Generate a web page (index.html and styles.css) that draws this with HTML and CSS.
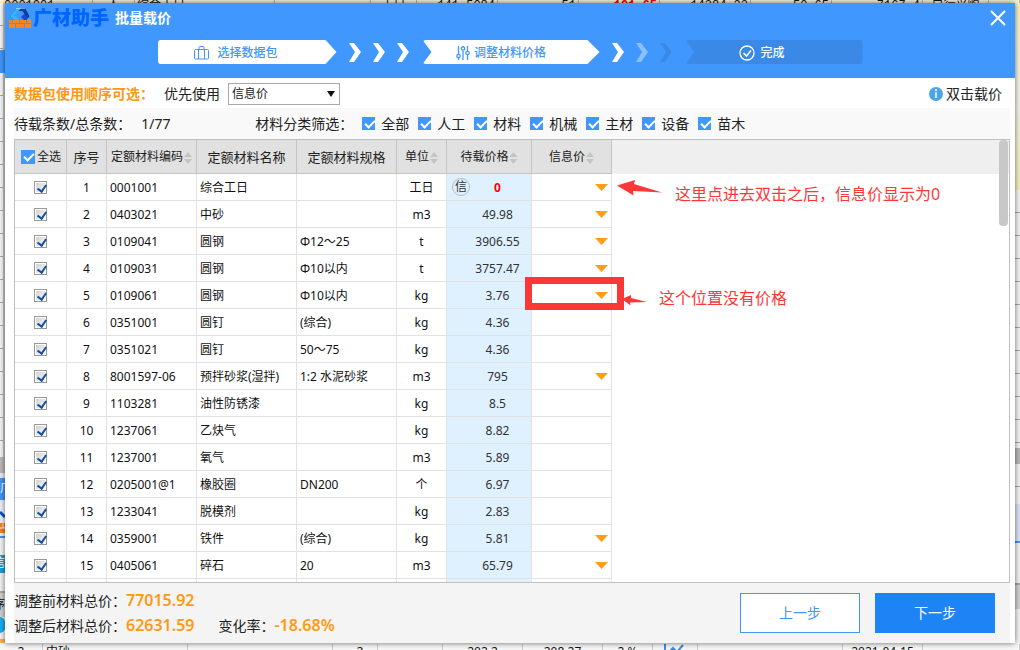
FILE: index.html
```html
<!DOCTYPE html>
<html lang="zh-CN">
<head>
<meta charset="utf-8">
<meta name="viewport" content="width=device-width, initial-scale=1">
<title>批量载价</title>
<link rel="stylesheet" href="styles.css">
</head>
<body>
<div class="backdrop" aria-hidden="true">
  <div class="sheet-row">
    <span class="c-code">0001001</span><span class="c-type">人</span><span class="c-name">综合工日</span><span class="c-blank"></span><span class="c-unit">工日</span><span class="c-num">141.5084</span><span class="c-num">51</span><span class="c-num alert">101.65</span><span class="c-wide">14384.33</span><span class="c-num">50.65</span><span class="c-wide">7167.4</span><span class="c-buy">自行采购</span><span class="c-rest"></span>
  </div>
  <div class="sheet-sides">
    <div class="side-left">
      <i class="tile lines"></i><i class="tile blue"></i><i class="tile lines grow"></i><i class="tile gray"></i><i class="tile pale"></i>
      <i class="tile logo-blue">广</i>
      <svg class="tile-mark" viewBox="0 0 5 36"><path d="M0 0h5v36H0z" fill="#eef3ff"/><path d="M0 12l5 5" stroke="#0a50c8" stroke-width="3"/><path d="M0 23h5v10H0z" fill="#ff8412"/><path d="M0 28h5M3 23v5" stroke="#fff"/></svg>
      <i class="tile rule"></i><i class="tile cyan">信</i><i class="tile pale gap"></i><i class="tile head">序</i><i class="tile cyan-dot"></i><i class="tile orange-dot"></i>
    </div>
    <div class="side-right">
      <i class="tile yellow"></i><i class="tile lines grow"></i><i class="tile gray"></i><i class="tile lines mid"></i><i class="tile pale blue-edge"></i><i class="tile plain"></i><i class="tile head"></i><i class="tile plain last"></i>
    </div>
  </div>
  <div class="list-row">
    <span class="l-no">2</span><span class="l-name">中砂</span><span class="l-blank"></span><span class="l-qty">2</span><span class="l-blank2"></span><span class="l-price">202.2</span><span class="l-price">208.27</span><span class="l-rate">2 %</span><span class="l-chart"><svg width="22" height="16" viewBox="0 0 22 16"><path d="M1 0v14h20M4 9l5-5 4 4 6-7" fill="none" stroke="#3c8cf0" stroke-width="2"/></svg></span><span class="l-blank3"></span><span class="l-date">2021-04-15</span><span class="l-rest"></span>
  </div>
</div>

<main class="dialog">
  <header class="top">
    <div class="titlebar">
      <svg class="logo" width="22" height="20" viewBox="0 0 22 20">
        <path d="M8 0h8l4.500 8-2 3-5-8H9L5 8l4 4H5L1 8z" fill="#0b3f9e"/>
        <path d="M8 0h4L5.500 7.500 10 12H5L1 8z" fill="#35b8ff"/>
        <path d="M7 0h9" stroke="#e8f4ff"/>
        <path d="M12 9l3.500-3.500L18 10v2h-3z" fill="#0a50d0"/>
        <path d="M0 16h6v4H0zM7 16h8v4H7zM16 16h6v4h-6zM0 12h3v3H0zM4 12h6v3H4zM11 12h6v3h-6zM18 11h4v4h-4z" fill="#ff8412"/>
      </svg>
      <strong class="brand">广材助手</strong>
      <h1 class="title">批量载价</h1>
      <button class="close" type="button" aria-label="关闭"><svg width="16" height="16" viewBox="0 0 16 16"><path d="M1 1l14 14M15 1L1 15" stroke="#fff" stroke-width="2"/></svg></button>
    </div>
    <ol class="steps">
      <li class="step first"><svg width="16" height="14" viewBox="0 0 16 14" fill="none" stroke="#4098ff"><rect x=".5" y="3.5" width="14" height="9.500" rx="1"/><path d="M4.500 3.500v9.500M10.500 3.500v9.500M5 3V1.500q0-1 1-1h3q1 0 1 1V3"/></svg>选择数据包</li>
      <li class="arrows">
        <svg width="12" height="19" viewBox="0 0 12 19"><path d="M0 0h5l7 9-7 10H0l6-10z"/></svg>
        <svg width="12" height="19" viewBox="0 0 12 19"><path d="M0 0h5l7 9-7 10H0l6-10z"/></svg>
        <svg width="12" height="19" viewBox="0 0 12 19"><path d="M0 0h5l7 9-7 10H0l6-10z"/></svg>
      </li>
      <li class="step current"><svg width="14" height="16" viewBox="0 0 14 16" fill="none" stroke="#4098ff" stroke-width="1.300"><path d="M2.500 1v8M2.500 13v2M7 1v1M7 6v9M11.500 1v5M11.500 10v5"/><circle cx="2.500" cy="11" r="1.700"/><circle cx="7" cy="3.500" r="1.700"/><circle cx="11.500" cy="8" r="1.700"/></svg>调整材料价格</li>
      <li class="arrows">
        <svg width="12" height="19" viewBox="0 0 12 19"><path d="M0 0h5l7 9-7 10H0l6-10z"/></svg>
        <svg class="soft" width="12" height="19" viewBox="0 0 12 19"><path d="M0 0h5l7 9-7 10H0l6-10z"/></svg>
        <svg class="dim" width="12" height="19" viewBox="0 0 12 19"><path d="M0 0h5l7 9-7 10H0l6-10z"/></svg>
      </li>
      <li class="step last"><svg width="16" height="16" viewBox="0 0 16 16" fill="none" stroke="#fff" stroke-width="1.300"><circle cx="8" cy="8" r="7"/><path d="M4.500 8l3 3 4.500-5.500" stroke-width="1.600"/></svg>完成</li>
    </ol>
  </header>

  <div class="order">
    <strong class="order-hint">数据包使用顺序可选：</strong>
    <label for="source">优先使用</label>
    <div class="select-box"><select id="source"><option>信息价</option></select></div>
    <span class="tip"><svg width="14" height="14" viewBox="0 0 14 14"><circle cx="7" cy="7" r="7" fill="#4aa5e8"/><path d="M7 2v2M7 5v6" stroke="#fff" stroke-width="1.500"/></svg>双击载价</span>
  </div>

  <div class="filters">
    <span class="count-label">待载条数/总条数：</span><span class="count">1/77</span>
    <span class="filter-label">材料分类筛选：</span>
    <label class="filter"><input class="check" type="checkbox" checked>全部</label>
    <label class="filter"><input class="check" type="checkbox" checked>人工</label>
    <label class="filter"><input class="check" type="checkbox" checked>材料</label>
    <label class="filter"><input class="check" type="checkbox" checked>机械</label>
    <label class="filter"><input class="check" type="checkbox" checked>主材</label>
    <label class="filter"><input class="check" type="checkbox" checked>设备</label>
    <label class="filter"><input class="check" type="checkbox" checked>苗木</label>
  </div>

  <section class="grid">
    <table class="materials">
      <colgroup><col class="w-check"><col class="w-no"><col class="w-code"><col class="w-text"><col class="w-text"><col class="w-unit"><col class="w-price"><col class="w-info"><col></colgroup>
      <thead><tr>
        <th><label class="all"><input class="check" type="checkbox" checked>全选</label></th><th class="big">序号</th><th>定额材料编码<i class="sort"></i></th><th class="big">定额材料名称</th><th class="big">定额材料规格</th><th>单位<i class="sort"></i></th><th>待载价格<i class="sort"></i></th><th>信息价<i class="sort"></i></th><th class="filler"></th>
      </tr></thead>
      <tbody>
        <tr><td><input class="tick" type="checkbox" aria-label="1" checked></td><td>1</td><td>0001001</td><td>综合工日</td><td></td><td>工日</td><td><span class="source-tag">信</span><b class="zero">0</b></td><td><button class="drop" type="button" aria-label="展开"></button></td><td></td></tr>
        <tr><td><input class="tick" type="checkbox" aria-label="2" checked></td><td>2</td><td>0403021</td><td>中砂</td><td></td><td>m3</td><td>49.98</td><td><button class="drop" type="button" aria-label="展开"></button></td><td></td></tr>
        <tr><td><input class="tick" type="checkbox" aria-label="3" checked></td><td>3</td><td>0109041</td><td>圆钢</td><td>Φ12～25</td><td>t</td><td>3906.55</td><td><button class="drop" type="button" aria-label="展开"></button></td><td></td></tr>
        <tr><td><input class="tick" type="checkbox" aria-label="4" checked></td><td>4</td><td>0109031</td><td>圆钢</td><td>Φ10以内</td><td>t</td><td>3757.47</td><td><button class="drop" type="button" aria-label="展开"></button></td><td></td></tr>
        <tr><td><input class="tick" type="checkbox" aria-label="5" checked></td><td>5</td><td>0109061</td><td>圆钢</td><td>Φ10以内</td><td>kg</td><td>3.76</td><td><button class="drop" type="button" aria-label="展开"></button></td><td></td></tr>
        <tr><td><input class="tick" type="checkbox" aria-label="6" checked></td><td>6</td><td>0351001</td><td>圆钉</td><td>(综合)</td><td>kg</td><td>4.36</td><td></td><td></td></tr>
        <tr><td><input class="tick" type="checkbox" aria-label="7" checked></td><td>7</td><td>0351021</td><td>圆钉</td><td>50～75</td><td>kg</td><td>4.36</td><td></td><td></td></tr>
        <tr><td><input class="tick" type="checkbox" aria-label="8" checked></td><td>8</td><td>8001597-06</td><td>预拌砂浆(湿拌)</td><td>1:2 水泥砂浆</td><td>m3</td><td>795</td><td><button class="drop" type="button" aria-label="展开"></button></td><td></td></tr>
        <tr><td><input class="tick" type="checkbox" aria-label="9" checked></td><td>9</td><td>1103281</td><td>油性防锈漆</td><td></td><td>kg</td><td>8.5</td><td></td><td></td></tr>
        <tr><td><input class="tick" type="checkbox" aria-label="10" checked></td><td>10</td><td>1237061</td><td>乙炔气</td><td></td><td>kg</td><td>8.82</td><td></td><td></td></tr>
        <tr><td><input class="tick" type="checkbox" aria-label="11" checked></td><td>11</td><td>1237001</td><td>氧气</td><td></td><td>m3</td><td>5.89</td><td></td><td></td></tr>
        <tr><td><input class="tick" type="checkbox" aria-label="12" checked></td><td>12</td><td>0205001@1</td><td>橡胶圈</td><td>DN200</td><td>个</td><td>6.97</td><td></td><td></td></tr>
        <tr><td><input class="tick" type="checkbox" aria-label="13" checked></td><td>13</td><td>1233041</td><td>脱模剂</td><td></td><td>kg</td><td>2.83</td><td></td><td></td></tr>
        <tr><td><input class="tick" type="checkbox" aria-label="14" checked></td><td>14</td><td>0359001</td><td>铁件</td><td>(综合)</td><td>kg</td><td>5.81</td><td><button class="drop" type="button" aria-label="展开"></button></td><td></td></tr>
        <tr><td><input class="tick" type="checkbox" aria-label="15" checked></td><td>15</td><td>0405061</td><td>碎石</td><td>20</td><td>m3</td><td>65.79</td><td><button class="drop" type="button" aria-label="展开"></button></td><td></td></tr>
        <tr><td></td><td></td><td></td><td></td><td></td><td></td><td></td><td></td><td></td></tr>
      </tbody>
    </table>
    <div class="scroll-thumb"></div>
    <svg class="pointer pointer-a" width="46" height="16" viewBox="0 0 46 16"><path d="M0 5.500L18 0l-1 4 28 8.500-29-1.500.500 4.500z" fill="#fb3838"/></svg>
    <p class="note note-a">这里点进去双击之后，信息价显示为0</p>
    <div class="mark"></div>
    <svg class="pointer pointer-b" width="26" height="11" viewBox="0 0 26 11"><path d="M0 4L9 0v3l16 4-17 .500.500 3z" fill="#fb3838"/></svg>
    <p class="note note-b">这个位置没有价格</p>
  </section>

  <footer class="bottom">
    <dl class="totals">
      <div class="total-line"><dt>调整前材料总价：</dt><dd>77015.92</dd></div>
      <div class="total-line"><dt>调整后材料总价：</dt><dd>62631.59</dd><dt class="rate">变化率：</dt><dd>-18.68%</dd></div>
    </dl>
    <button class="btn" type="button">上一步</button>
    <button class="btn primary" type="button">下一步</button>
  </footer>
</main>
</body>
</html>
```

FILE: styles.css
```css
* { box-sizing: border-box; }

body {
  margin: 0;
  position: relative;
  height: 100vh;
  overflow: hidden;
  background: #fff;
  color: #222;
  font: 14px/20px "Noto Sans", "Noto Sans CJK SC", sans-serif;
}

button, input, select { margin: 0; font: inherit; }

/* Spreadsheet window behind the dialog */
.backdrop {
  position: absolute;
  inset: 0;
  display: flex;
  flex-direction: column;
  overflow: hidden;
  font: 12px/12px "Liberation Mono", "Noto Sans CJK SC", monospace;
  color: #111;
}
.sheet-row { display: flex; height: 3px; background: #f8f6d8; }
.sheet-row span { flex: none; border-right: 1px solid #b8b8b0; padding: 0 2px; white-space: nowrap; text-align: right; }
.sheet-row .c-code { width: 93px; padding-left: 4px; text-align: left; }
.sheet-row .c-type { width: 42px; text-align: center; }
.sheet-row .c-name { width: 140px; text-align: left; }
.sheet-row .c-blank { width: 96px; }
.sheet-row .c-unit { width: 46px; text-align: center; }
.sheet-row .c-num { width: 81px; }
.sheet-row .c-wide { width: 91px; }
.sheet-row .c-buy { width: 66px; text-align: center; }
.sheet-row .c-rest { flex: 1; }
.sheet-row .alert { color: #f00; font-weight: bold; }

.sheet-sides { flex: 1; min-height: 0; display: flex; justify-content: space-between; }
.side-left, .side-right { width: 5px; display: flex; flex-direction: column; overflow: hidden; }
.tile { display: block; flex: none; height: 20px; font-style: normal; overflow: hidden; background: #f7f7f7; }
.lines { height: 47px; background: repeating-linear-gradient(#f8f8f8 0 22px, #aaa 22px 23px); }
.lines.grow { flex: 1; height: auto; }
.side-left .lines { border-right: 2px solid #ccc; }
.blue { height: 23px; background: #4098ff; }
.gray { height: 16px; background: #bbb; }
.pale { height: 5px; background: #eef; }
.logo-blue { height: 22px; line-height: 22px; background: #4098ff; color: #fff; }
.tile-mark { display: block; width: 5px; height: 36px; flex: none; }
.rule { height: 19px; border-top: 2px solid #4098ff; }
.cyan { height: 18px; line-height: 18px; background: #18a0e0; color: #fff; direction: rtl; }
.gap { height: 18px; background: #f4f4f4; }
.head { height: 26px; line-height: 26px; background: #d4d4d4; border-top: 2px solid #aaa; direction: rtl; }
.cyan-dot { height: 16px; background: #18b0f0; border-radius: 0 6px 6px 0; }
.orange-dot { height: 10px; background: linear-gradient(#f7f7f7 0 6px, #ffb040 6px); }
.yellow { height: 187px; background: linear-gradient(#f8f5c8, #f7f7ee 50%, #f5f2c0); }
.lines.mid { height: 40px; }
.blue-edge { height: 39px; border-bottom: 2px solid #4098ff; background: #dde6f8; }
.plain { height: 40px; }
.plain.last { height: 34px; }

.list-row { display: flex; height: 7px; padding-top: 1px; font: 12px/16px "Noto Sans", "Noto Sans CJK SC", sans-serif; background: #f8f8f8; }
.list-row span { flex: none; height: 6px; border-right: 1px solid #ccc; text-align: center; }
.list-row .l-no { width: 43px; }
.list-row .l-name { width: 145px; padding-left: 3px; text-align: left; }
.list-row .l-blank { width: 145px; }
.list-row .l-qty { width: 45px; padding-left: 10px; }
.list-row .l-blank2 { width: 65px; }
.list-row .l-price { width: 80px; }
.list-row .l-rate { width: 50px; }
.list-row .l-chart { width: 45px; }
.list-row .l-blank3 { flex: 1; }
.list-row .l-date { width: 80px; }
.list-row .l-rest { width: 97px; }

/* Dialog */
.dialog {
  position: relative;
  display: flex;
  flex-direction: column;
  height: calc(100vh - 10px);
  margin: 0 5px;
  top: 3px;
  background: #fff;
  box-shadow: 0 0 6px rgba(0, 0, 0, .6);
}

.top { flex: none; height: 75px; background: #4098ff; color: #fff; }
.titlebar { display: flex; align-items: center; height: 30px; padding: 0 9px 0 4px; }
.logo { flex: none; }
.brand { margin-left: 2px; color: #0064ff; font-size: 19px; font-weight: 900; line-height: 24px; }
.title { margin: 0 0 0 6px; font-size: 14px; font-weight: bold; line-height: 20px; }
.close { display: flex; margin-left: auto; padding: 0; border: 0; background: none; }

.steps { display: flex; justify-content: center; gap: 12px; margin: 7px 0 0; padding: 0; list-style: none; }
.step {
  display: flex;
  align-items: center;
  justify-content: center;
  width: 177px;
  height: 24px;
  padding-top: 1px;
  border-radius: 3px;
  background: #fff;
  color: #4098ff;
  font-size: 12px;
  font-weight: 500;
}
.step svg { flex: none; }
.step.first { width: 179px; padding-right: 22px; gap: 7px; clip-path: polygon(0 0, 168px 0, 100% 50%, 168px 100%, 0 100%); }
.step.current { padding-right: 20px; gap: 4px; clip-path: polygon(0 0, 165px 0, 100% 50%, 165px 100%, 0 100%, 9px 50%); }
.step.last { gap: 5px; padding-right: 24px; background: #3b89e6; color: #fff; clip-path: polygon(0 0, 100% 0, 100% 100%, 0 100%, 9px 50%); }
.arrows { display: flex; align-items: center; gap: 12px; margin-right: 2px; fill: #fff; }
.arrows .soft { opacity: .4; }
.arrows .dim { fill: #3b89e6; }

.order { flex: none; display: flex; align-items: center; height: 30px; padding: 1px 13px 0 9px; }
.order-hint { margin-right: 10px; color: #ff9912; }
.select-box { position: relative; width: 112px; height: 22px; margin-left: 8px; }
.select-box select { width: 100%; height: 100%; padding: 0 3px; border: 1px solid #aaa; border-radius: 0; background: #fff; color: #222; font-size: 12px; appearance: none; }
.select-box::after { content: ""; position: absolute; right: 5px; top: 8px; border: 4px solid transparent; border-top: 6px solid #111; border-bottom: 0; pointer-events: none; }
.tip { display: flex; align-items: center; gap: 3px; margin-left: auto; }

.filters { flex: none; display: flex; align-items: center; height: 31px; margin: 0 5px 0 9px; background: #f9f9f9; }
.count { width: 114px; margin-left: 10px; }
.filter-label { margin-right: 9px; }
.filter { display: flex; align-items: center; gap: 6px; width: 56px; white-space: nowrap; }

.check { appearance: none; position: relative; flex: none; width: 13px; height: 13px; background: #4098ff; }
.check:checked::before { content: ""; position: absolute; left: 3px; top: 3px; width: 8px; height: 4px; border: solid #fff; border-width: 0 0 2px 2px; transform: rotate(-45deg); }

.grid { position: relative; flex: 1; min-height: 0; margin: 0 5px 0 9px; border: 1px solid #c0c0c0; overflow: hidden; }
.materials { width: 100%; border-spacing: 0; table-layout: fixed; color: #111; font-size: 12px; line-height: 18px; }
.w-check { width: 52px; }
.w-no { width: 40px; }
.w-code { width: 90px; }
.w-text { width: 100px; }
.w-unit { width: 50px; }
.w-price { width: 85px; }
.w-info { width: 80px; }
.materials th { height: 34px; padding: 1px 0 0; border: solid #c4c4c4; border-width: 0 1px 1px 0; background: #e1e1e1; color: #222; font-weight: normal; white-space: nowrap; }
.materials th.big { padding-top: 0; font-size: 13px; }
.materials th.filler { border: 0; background: #efefef; }
.materials td { height: 27px; padding: 2px 0 0; border: solid #e2e2e2; border-width: 0 1px 1px 0; text-align: center; white-space: nowrap; }
.materials td:first-child { padding: 0 1px 0 0; }
.materials td:nth-child(3), .materials td:nth-child(4), .materials td:nth-child(5) { padding-left: 3px; text-align: left; }
.materials td:nth-child(7) { position: relative; padding-left: 17px; background: #dff1ff; color: #333; }
.materials td:nth-child(8) { padding-right: 3px; text-align: right; }
.materials td:last-child { border: 0; }
.all { display: flex; align-items: center; justify-content: center; gap: 2px; padding-left: 1px; }
.all .check { width: 14px; height: 14px; }
.sort { display: inline-block; width: 8px; height: 12px; margin-left: 1px; vertical-align: -3px; background: linear-gradient(#c4c4c4 5px, #e1e1e1 5px 7px, #c4c4c4 7px); clip-path: polygon(50% 0, 100% 5px, 100% 7px, 50% 100%, 0 7px, 0 5px); }
.tick { appearance: none; position: relative; display: block; width: 13px; height: 13px; margin: 0 auto; border: 1px solid #999; background: linear-gradient(135deg, #ccc, #fff); box-shadow: inset 0 0 0 1px #fff; }
.tick:checked::before { content: ""; position: absolute; left: 4px; top: 1px; width: 4px; height: 7px; border: solid #1450a0; border-width: 0 2px 2px 0; transform: rotate(35deg); }
.source-tag { position: absolute; left: 5px; top: 4px; width: 18px; height: 18px; border: 1px solid #bbb; border-radius: 50%; line-height: 16px; }
.zero { color: #f00; }
.drop { display: inline-block; width: 13px; height: 7px; padding: 0; border: 0; vertical-align: 1px; background: #ff9d14; clip-path: polygon(0 0, 100% 0, 50% 100%); }
.scroll-thumb { position: absolute; top: 0; right: 1px; width: 9px; height: 86px; border-radius: 4px; background: #c8c8c8; }

/* Red annotations laid over the table */
.note { position: absolute; margin: 0; color: #fb3838; font-size: 16px; line-height: 24px; white-space: nowrap; }
.note-a { left: 660px; top: 42px; }
.note-b { left: 644px; top: 146px; }
.pointer { position: absolute; }
.pointer-a { left: 602px; top: 40px; }
.pointer-b { left: 607px; top: 155px; }
.mark { position: absolute; left: 510px; top: 137px; width: 99px; height: 33px; border: 7px solid #fb3838; }

.bottom { flex: none; display: flex; align-items: center; gap: 15px; height: 60px; margin: 0 5px 0 9px; padding-right: 15px; background: #f4f4f4; }
.totals { flex: 1; margin: 0; }
.total-line { display: flex; align-items: center; height: 25px; }
.total-line dd { margin: 0; color: #ff9912; font-size: 16px; line-height: 20px; padding-bottom: 2px; font-weight: 600; }
.total-line .rate { margin-left: 24px; }
.btn { width: 120px; height: 40px; padding: 0; border: 1px solid #4098ff; background: #fff; color: #4098ff; font-size: 14px; }
.btn.primary { border-color: #1e84f5; background: #1e84f5; color: #fff; }
```
